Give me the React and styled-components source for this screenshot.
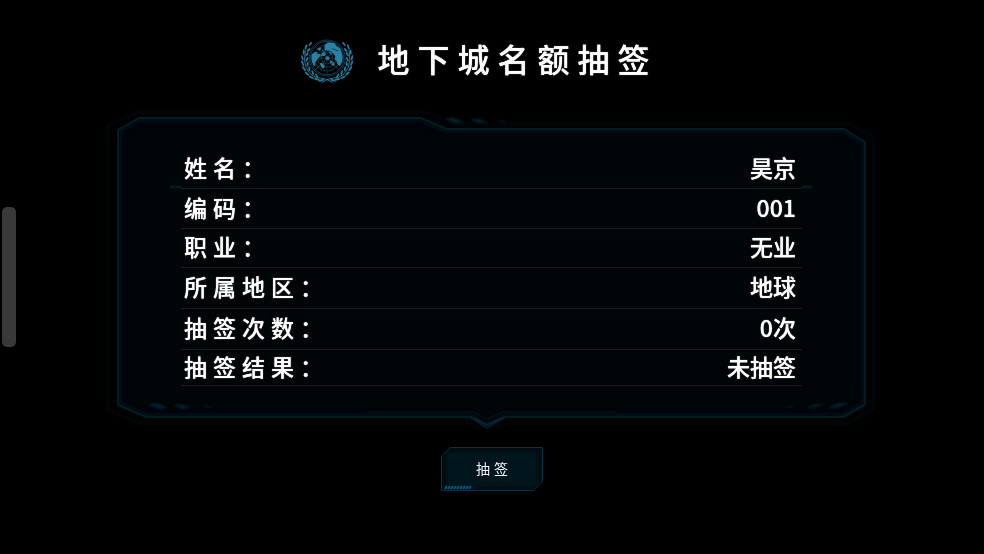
import React, { useState } from "react";
import styled, { createGlobalStyle } from "styled-components";

const GlobalStyle = createGlobalStyle`
  * { box-sizing: border-box; }
  body {
    margin: 0;
    background: #000;
    color: #fff;
    font-family: "Noto Sans CJK SC", sans-serif;
  }
`;

const Page = styled.main`
  min-height: 100vh;
  display: flex;
  flex-direction: column;
  align-items: center;
  padding-top: 36px;
  overflow: hidden;
`;

const Header = styled.header`
  display: flex;
  align-items: center;
  gap: 23px;
  height: 48px;
  margin-right: 26px;
`;

const Title = styled.h1`
  margin: 0;
  padding-bottom: 4px;
  font-size: 32px;
  line-height: 44px;
  font-weight: 500;
  letter-spacing: 8px;
  white-space: nowrap;
  text-shadow: 0 0 1px #fff;
`;

const EmblemSvg = styled.svg`
  width: 54px;
  height: 46px;
  flex: none;
`;

const Panel = styled.section`
  position: relative;
  width: 76%;
  margin-top: 33px;
  padding: 32px 64px 31px 63px;
`;

const PanelFrame = styled.svg`
  position: absolute;
  top: -12px;
  left: -12px;
  width: calc(100% + 24px);
  height: calc(100% + 24px);
  z-index: -1;
`;

const InfoList = styled.dl`
  margin: 0;
`;

const InfoRow = styled.div`
  display: flex;
  justify-content: space-between;
  align-items: center;
  height: ${(p) => p.$height}px;
  padding: 0 6px 4px 3px;
  border-bottom: 1px solid #151c1c;
  font-size: 23px;
  line-height: 32px;
  font-weight: 500;
  white-space: nowrap;
  text-shadow: 0 0 1px #fff;
`;

const Label = styled.dt`
  letter-spacing: 6px;
`;

const Value = styled.dd`
  margin: 0;
`;

const DrawButton = styled.button`
  position: relative;
  z-index: 0;
  width: 102px;
  height: 44px;
  margin-top: 30px;
  padding: 0 0 2px 4px;
  border: 0;
  background: none;
  color: #f2f6f8;
  font-family: inherit;
  font-size: 14px;
  line-height: 20px;
  letter-spacing: 4px;
  cursor: pointer;
`;

const ButtonFrame = styled.svg`
  position: absolute;
  inset: 0;
  width: 100%;
  height: 100%;
  z-index: -1;
`;

const SideHandle = styled.div`
  position: fixed;
  left: 2px;
  top: 50%;
  width: 14px;
  height: 140px;
  margin-top: -70px;
  border-radius: 5px;
  background: #393939;
`;

const LEAVES = [
  [94, 150, 18, 3, 165],
  [80, 147, 18, 3, 190],
  [80, 136, 15, 3, 240],
  [64, 141, 18, 3, 205],
  [68, 127, 15, 3, 250],
  [51, 130, 18, 3, 222],
  [58, 115, 15, 3, 262],
  [42, 115, 18, 3, 235],
  [53, 101, 15, 3, 280],
  [38, 99, 18, 3, 245],
  [51, 87, 15, 3, 290],
  [37, 82, 17, 3, 258],
  [51, 72, 15, 3, 300],
  [41, 65, 17, 3, 272],
  [56, 59, 15, 3, 312],
  [48, 50, 17, 3, 290],
  [61, 41, 16, 3, 308],
];

function Laurel() {
  return (
    <g>
      {LEAVES.map(([x, y, l, w, a]) => (
        <ellipse
          key={`${x}-${y}`}
          cx={x}
          cy={y}
          rx={l / 2}
          ry={w}
          transform={`rotate(${a} ${x} ${y})`}
        />
      ))}
      <path
        d="M128 157Q108 142 78 142Q34 122 46 60"
        fill="none"
        stroke="#247a9c"
        strokeWidth="3"
      />
    </g>
  );
}

function Emblem() {
  return (
    <EmblemSvg viewBox="30 20 162 138" aria-hidden="true">
      <g fill="#247a9c">
        <Laurel />
        <g transform="translate(223 0) scale(-1 1)">
          <Laurel />
        </g>
      </g>
      <g fill="none" stroke="#155a72" strokeWidth="2">
        <circle cx="111.5" cy="83" r="54" />
        <circle cx="111.5" cy="83" r="50" />
        <circle cx="111.5" cy="83" r="39" />
        <circle cx="111.5" cy="83" r="28" />
        <circle cx="111.5" cy="83" r="17" />
        <path d="M111.5 33V133M61 83H162M76 48L147 118M147 48L76 118" />
      </g>
      <g fill="#2882a5">
        <path d="M104 43L116 36L133 38L139 46L150 54L155 66L158 78L157 94L149 108L142 101L139 91L132 88L135 79L130 71L121 70L115 62L106 62L103 54Z" />
        <path d="M64 73L74 65L83 66L82 72L93 70L99 64L96 60L107 61L101 74L91 79L85 82L80 91L75 96L77 109L70 104L65 92Z" />
        <path d="M99 71L108 68L106 76L98 77ZM108 79L116 79L120 84L115 90L107 88ZM120 90L132 94L133 106L126 105L120 98ZM90 98L101 98L105 106L99 116L93 109ZM82 56L91 50L94 56L88 61Z" />
      </g>
      <g fill="none" stroke="#020b10">
        <path d="M112 62V78M112 90V130M128 83H134M126 68L136 78M127 55L145 62" strokeWidth="2" />
        <circle cx="111.5" cy="83" r="22" strokeWidth="2" />
      </g>
      <circle cx="111.5" cy="83" r="5" fill="#247a9c" />
    </EmblemSvg>
  );
}

const OUTLINE =
  "M1 12L22 0H304L330 11H727L748 24V287L726 299H389L370 310L353 299H29L1 287Z";

function Frame() {
  return (
    <PanelFrame viewBox="-11 -13 772 324" preserveAspectRatio="none" aria-hidden="true">
      <defs>
        <filter id="soft" x="-10%" y="-10%" width="120%" height="120%">
          <feGaussianBlur stdDeviation="4" />
        </filter>
        <filter id="smear" x="-50%" y="-100%" width="200%" height="300%">
          <feGaussianBlur stdDeviation="1" />
        </filter>
        <clipPath id="body">
          <path d={OUTLINE} />
        </clipPath>
      </defs>
      <path
        d="M-9 8L18 -5H310L337 6H733L757 19V291L731 305H393L371 316L349 305H23L-9 292Z"
        fill="#000101"
        stroke="#010507"
        strokeWidth="4"
      />
      <path d={OUTLINE} fill="#000507" />
      <g clipPath="url(#body)">
        <path d={OUTLINE} fill="none" stroke="#010f16" strokeWidth="8" filter="url(#soft)" />
      </g>
      <path d={OUTLINE} fill="none" stroke="#021c28" strokeWidth="2" />
      <path d="M250 294H356L370 301L386 294H500" fill="none" stroke="#010e14" strokeWidth="2" />
      <path d="M354 299L370 307L388 299" fill="none" stroke="#032637" strokeWidth="2" />
      <g fill="#03202d" filter="url(#smear)">
        <path d="M326 0L338 0L349 5L337 5ZM352 1L362 1L372 5L361 5Z" />
        <path d="M378 3L386 2L393 5L385 5Z" opacity=".5" />
        <path d="M30 286L40 285L52 290L42 291ZM56 287L64 286L74 290L66 291Z" />
        <path d="M84 287L90 287L97 290L90 290Z" opacity=".6" />
        <path d="M710 290L722 285L732 285L720 290ZM688 290L700 286L708 286L697 290Z" />
        <path d="M666 290L673 287L680 287L673 290Z" opacity=".5" />
      </g>
      <path d="M53 69H65M685 69H695" stroke="#021a23" strokeWidth="3" />
      <path d="M65 69H685" stroke="#010c10" strokeWidth="1" />
    </PanelFrame>
  );
}

const TICKS = Array.from({ length: 9 }, (_, i) => 4 + i * 3);

function ButtonArt() {
  return (
    <ButtonFrame viewBox="0 0 102 44" preserveAspectRatio="none" aria-hidden="true">
      <defs>
        <filter id="inner" x="-10%" y="-20%" width="120%" height="140%">
          <feGaussianBlur stdDeviation="1" />
        </filter>
      </defs>
      <path d="M9 0.5H101.5V34L93 43.5H0.5V9Z" fill="#010c11" stroke="#043247" />
      <rect x="6" y="5" width="90" height="34" fill="#01131b" filter="url(#inner)" />
      <path
        d={TICKS.map((x) => `M${x} 42L${x + 2} 39`).join("")}
        stroke="#07587b"
        strokeWidth="2"
      />
    </ButtonFrame>
  );
}

export default function App() {
  const [draws, setDraws] = useState(0);
  const rows = [
    { label: "姓名：", value: "昊京", height: 40 },
    { label: "编码：", value: "001", height: 40 },
    { label: "职业：", value: "无业", height: 39 },
    { label: "所属地区：", value: "地球", height: 41 },
    { label: "抽签次数：", value: `${draws}次`, height: 41 },
    { label: "抽签结果：", value: draws ? "未中签" : "未抽签", height: 36 },
  ];
  return (
    <>
      <GlobalStyle />
      <Page>
        <Header>
          <Emblem />
          <Title>地下城名额抽签</Title>
        </Header>
        <Panel>
          <Frame />
          <InfoList>
            {rows.map((row) => (
              <InfoRow key={row.label} $height={row.height}>
                <Label>{row.label}</Label>
                <Value>{row.value}</Value>
              </InfoRow>
            ))}
          </InfoList>
        </Panel>
        <DrawButton type="button" onClick={() => setDraws(draws + 1)}>
          <ButtonArt />
          抽签
        </DrawButton>
      </Page>
      <SideHandle />
    </>
  );
}
